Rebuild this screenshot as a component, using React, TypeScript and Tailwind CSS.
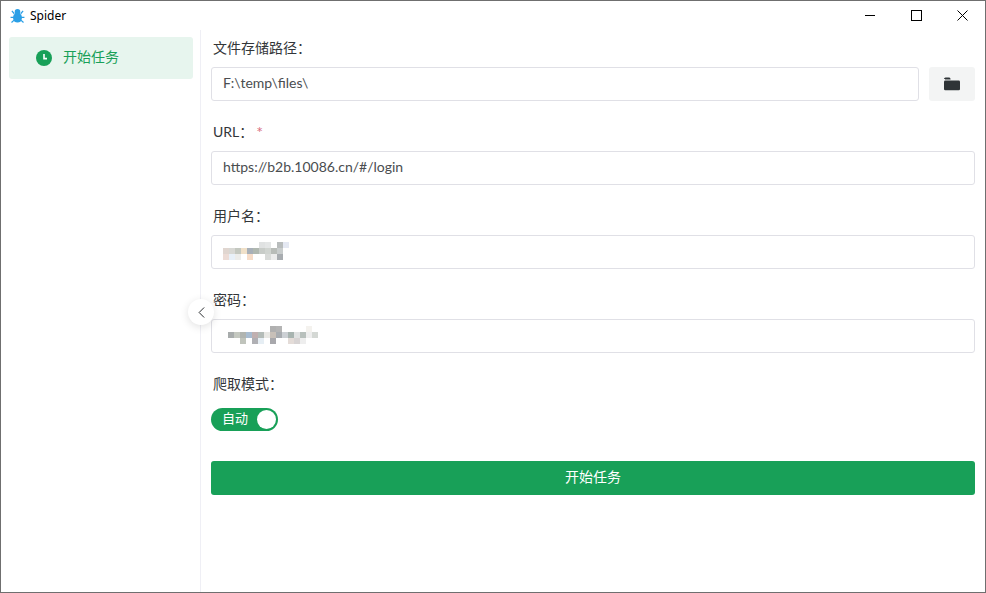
import React from "react";
import { ChevronLeft } from "lucide-react";

const FONT = "font-['Lato','Noto_Sans_CJK_SC',sans-serif]";

const mosaicOne: [number, number, number, string][] = [
  [0, 6, 6, "#e0d6d0"], [6, 6, 6, "#d8d8d4"], [12, 6, 6, "#c4c8c0"], [18, 6, 6, "#f0e0c8"], [24, 6, 6, "#a8b0b8"],
  [30, 6, 6, "#b0b8b0"], [36, 6, 6, "#c8ccc8"], [42, 6, 6, "#d0d4d0"], [48, 6, 6, "#b8bcb8"],
  [36, 0, 6, "#e0e2e2"], [42, 0, 6, "#e4e6e6"], [54, 0, 6, "#b8bcbc"], [60, 0, 6, "#e4e8f2"], [54, 6, 6, "#c8cccc"],
  [0, 12, 6, "#ecdcd6"], [6, 12, 6, "#e8f0f8"], [12, 12, 6, "#ececea"], [24, 12, 6, "#f6dcc8"], [42, 12, 6, "#d8dad8"], [54, 12, 6, "#a8acb0"],
  [48, 12, 6, "#ececec"],
];

const mosaicTwo: [number, number, number, string][] = [
  [0, 6, 6, "#a8acac"], [6, 6, 6, "#c4c8c0"], [12, 6, 6, "#b0b4b0"], [18, 6, 6, "#a8bcd0"], [24, 6, 6, "#c0b0b0"],
  [30, 6, 6, "#b4bcb8"], [36, 6, 6, "#e8e8e4"], [42, 6, 6, "#c8c0b8"], [48, 6, 6, "#a8acb0"], [54, 6, 6, "#ccd0d4"],
  [60, 6, 6, "#a8b4b0"], [66, 6, 6, "#e0e2e2"], [72, 6, 6, "#b8c0bc"], [78, 6, 6, "#eeeeee"], [84, 6, 6, "#d4d8d4"],
  [42, 0, 6, "#b0b0b0"], [48, 0, 6, "#b4b4b4"], [78, 0, 6, "#f4f2ee"],
  [12, 12, 6, "#c0c4bc"], [24, 12, 6, "#b0b0b4"], [30, 12, 6, "#e6eef4"], [42, 12, 6, "#a8a8ac"],
  [60, 12, 6, "#e4dcd8"], [66, 12, 6, "#d8d4d4"], [72, 12, 6, "#eeeeee"],
];

const Mosaic: React.FC<{ cells: [number, number, number, string][]; width: number }> = ({ cells, width }) => (
  <svg width={width} height={18} className="block" shapeRendering="crispEdges">
    {cells.map(([x, y, s, c]) => (
      <rect key={`${x}-${y}`} x={x} y={y} width={s} height={s} fill={c} />
    ))}
  </svg>
);

const Label: React.FC<{ children: React.ReactNode }> = ({ children }) => (
  <div className="h-[30px] mb-1 flex items-center pl-0.5 text-sm text-[#333639]">{children}</div>
);

const Field: React.FC<{ children: React.ReactNode }> = ({ children }) => (
  <div className="flex-1 h-[34px] flex items-center px-[11px] pb-[2px] bg-white border border-[#e0e0e6] rounded-[3px] text-sm text-[#4a4d50]">
    {children}
  </div>
);

const App: React.FC = () => (
  <div className={`${FONT} w-[986px] h-[593px] flex flex-col bg-white border border-[#6f6f6f] overflow-hidden`}>
    {/* title bar */}
    <div className="h-[29px] shrink-0 flex items-center justify-between">
      <div className="flex items-center pl-[9px] gap-[5px]">
        <svg width="15" height="16" viewBox="0 0 16 16" fill="#2a9fe6">
          <ellipse cx="8" cy="9.8" rx="4.8" ry="5.2" />
          <circle cx="8" cy="3.6" r="3" />
          <path d="M2 2.5 L4.6 5.6 M14 2.5 L11.4 5.6 M0.6 9.5 H4 M15.4 9.5 H12 M1.6 15 L4.4 12.4 M14.4 15 L11.6 12.4" stroke="#2a9fe6" strokeWidth="1.3" fill="none" />
        </svg>
        <span className="text-xs text-black font-['Noto_Sans',sans-serif]">Spider</span>
      </div>
      <div className="flex items-center text-black">
        <div className="w-[46px] flex justify-center">
          <svg width="10" height="11" viewBox="0 0 10 11" shapeRendering="crispEdges">
            <rect x="0" y="5" width="10" height="1" fill="#000" />
          </svg>
        </div>
        <div className="w-[46px] flex justify-center">
          <svg width="11" height="11" viewBox="0 0 11 11" shapeRendering="crispEdges">
            <rect x="0.5" y="0.5" width="10" height="10" fill="none" stroke="#000" />
          </svg>
        </div>
        <div className="w-[46px] flex justify-center">
          <svg width="11" height="11" viewBox="0 0 11 11">
            <path d="M0.5 0.5 L10.5 10.5 M10.5 0.5 L0.5 10.5" stroke="#000" strokeWidth="1" fill="none" />
          </svg>
        </div>
      </div>
    </div>

    <div className="flex-1 flex">
      {/* sidebar */}
      <div className="relative w-[200px] shrink-0 border-r border-[#efeff5] pl-2 pr-[7px] pt-[7px]">
        <div className="h-[42px] flex items-center rounded-[3px] bg-[#e7f5ee] pl-[27px] gap-[11px] text-sm text-[#18a058]">
          <svg width="16" height="16" viewBox="0 0 16 16">
            <circle cx="8" cy="8" r="8" fill="#18a058" />
            <path d="M8 4 V8.6 H11" stroke="#fff" strokeWidth="1.6" fill="none" />
          </svg>
          <span className="mb-[2px]">开始任务</span>
        </div>
        <div className="absolute right-[-14px] top-[269px] w-[26px] h-[26px] rounded-full bg-white shadow-[0_2px_8px_rgba(0,0,0,0.12)] flex items-center justify-center text-[#1f2225]">
          <ChevronLeft size={19} strokeWidth={1.2} />
        </div>
      </div>

      {/* form */}
      <div className="flex-1 pl-[10px] pr-[10px] pt-[3px]">
        <Label>文件存储路径：</Label>
        <div className="flex gap-[10px] mb-4">
          <Field>F:\temp\files\</Field>
          <div className="w-[46px] h-[34px] rounded-[3px] bg-[#f3f4f4] flex items-center justify-center">
            <svg width="16" height="14" viewBox="0 0 16 14" fill="#2f3437">
              <path d="M0 2 a1.5 1.5 0 0 1 1.5 -1.5 H5 a1.5 1.5 0 0 1 1.4 1 L6.6 2.6 H1 V2 Z" />
              <rect x="0" y="3.4" width="16" height="9.8" rx="1.3" />
            </svg>
          </div>
        </div>

        <Label>
          URL：<span className="ml-[3px] text-base leading-none text-[#d8707f]">*</span>
        </Label>
        <div className="flex mb-4">
          <Field>https://b2b.10086.cn/#/login</Field>
        </div>

        <Label>用户名：</Label>
        <div className="flex mb-4">
          <Field>
            <Mosaic cells={mosaicOne} width={66} />
          </Field>
        </div>

        <Label>密码：</Label>
        <div className="flex mb-4">
          <Field>
            <div className="pl-[5px]">
              <Mosaic cells={mosaicTwo} width={90} />
            </div>
          </Field>
        </div>

        <Label>爬取模式：</Label>
        <div className="pt-[5px] mb-[30px]">
          <div className="w-[67px] h-[23px] rounded-full bg-[#18a058] flex items-center justify-between pl-[11px] pr-[2px] text-[13px] text-white">
            <span className="mb-[1px]">自动</span>
            <span className="w-[19px] h-[19px] rounded-full bg-white" />
          </div>
        </div>

        <div className="h-[34px] pb-[2px] rounded-[3px] bg-[#18a058] flex items-center justify-center text-sm text-white">
          开始任务
        </div>
      </div>
    </div>
  </div>
);

export default App;
